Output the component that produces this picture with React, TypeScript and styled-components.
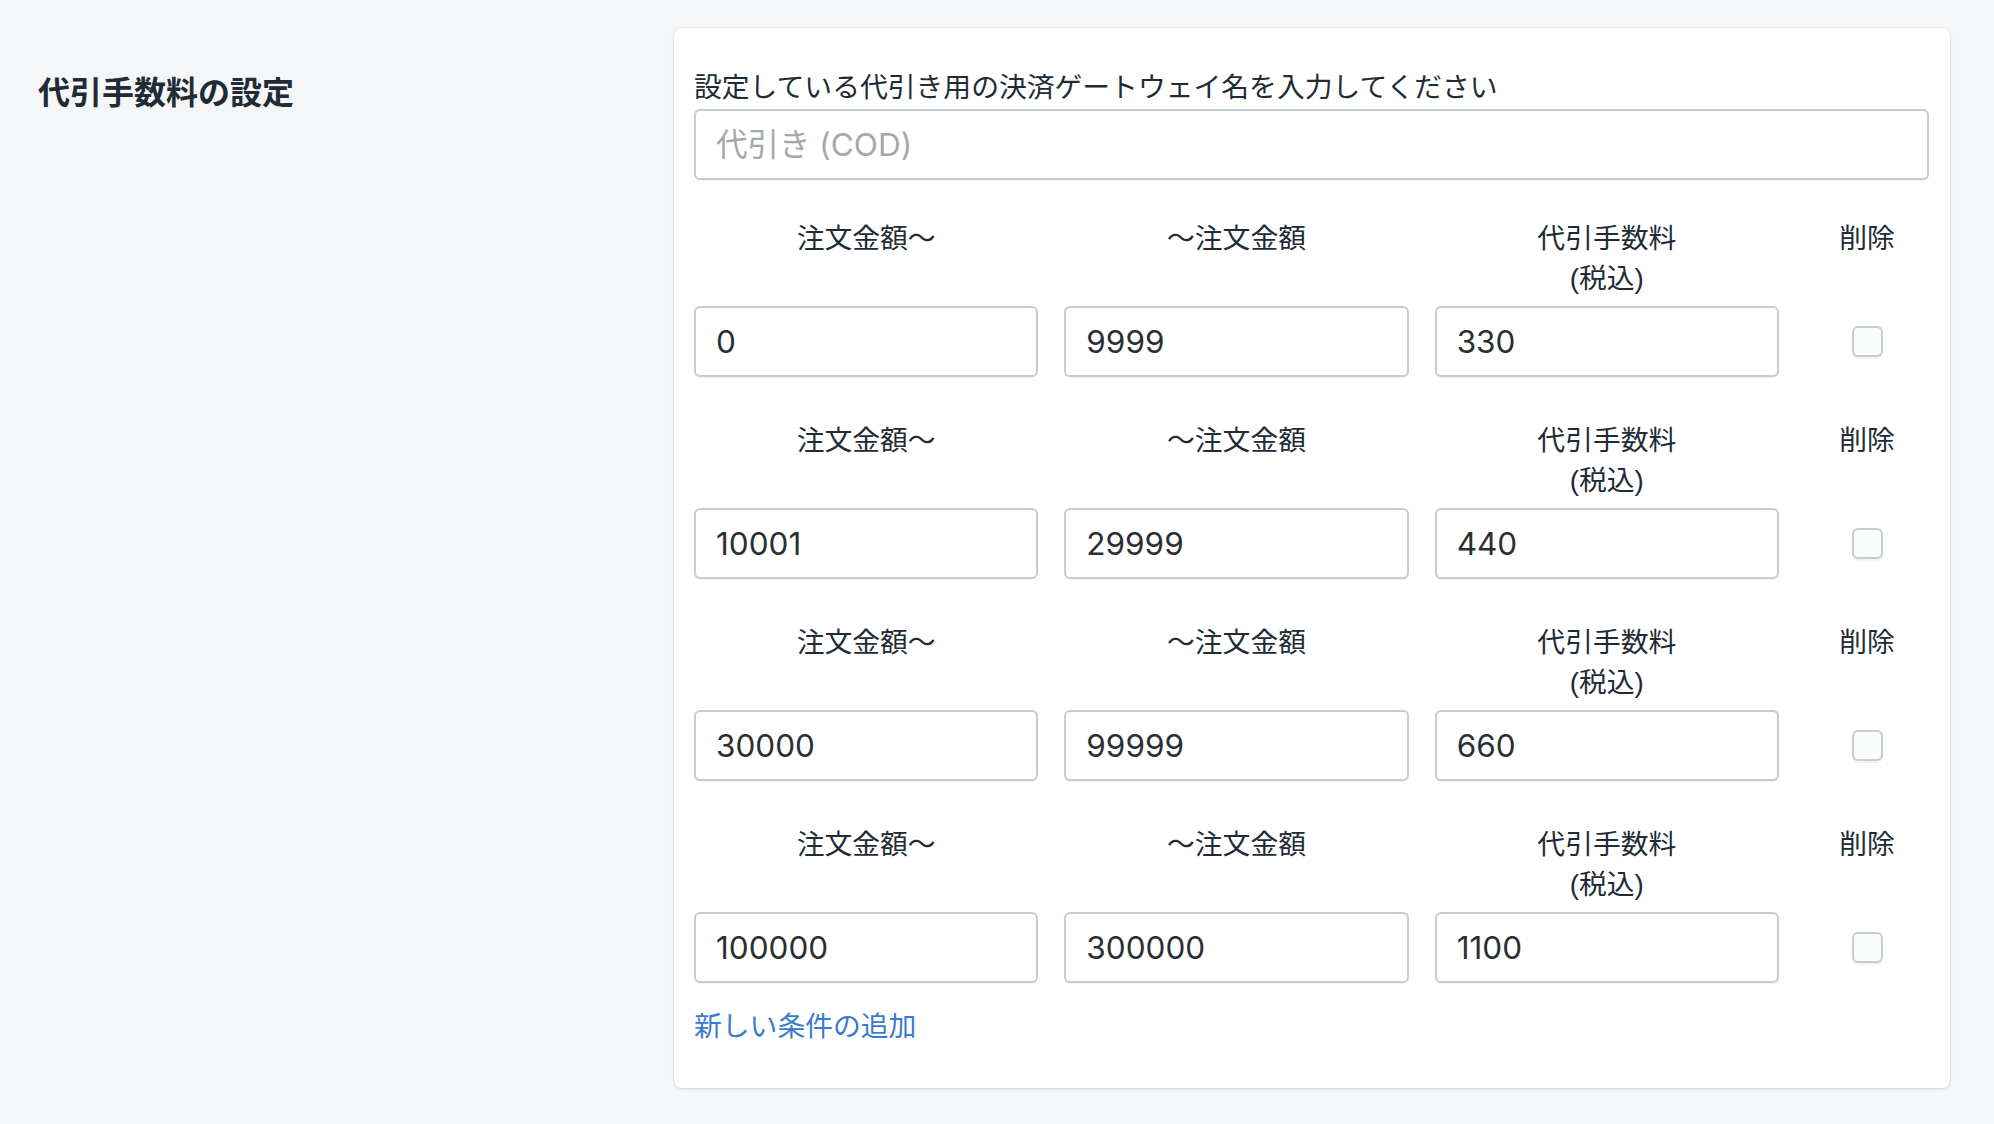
import React from "react";
import styled, { createGlobalStyle } from "styled-components";

const GlobalStyle = createGlobalStyle`
  html, body {
    margin: 0;
    padding: 0;
    background: #f4f6f8;
  }
  body {
    font-family: "Liberation Sans", "Noto Sans CJK JP", sans-serif;
    color: #212b36;
  }
  * { box-sizing: border-box; }
`;

const Page = styled.div`
  display: flex;
  align-items: flex-start;
  padding: 28px 44px 37px 38px;
  min-height: 1124px;
`;

const Aside = styled.div`
  width: 636px;
  flex: none;
`;

const Title = styled.h2`
  margin: 45px 0 0;
  font-family: "Liberation Sans", "Noto Sans CJK JP", sans-serif;
  font-size: 32px;
  line-height: 40px;
  font-weight: 700;
  color: #212b36;
`;

const Card = styled.section`
  flex: 1;
  background: #ffffff;
  border-radius: 8px;
  box-shadow: 0 0 0 1px rgba(63, 63, 68, 0.05), 0 1px 3px 0 rgba(63, 63, 68, 0.15);
  padding: 44px 21px 45px 20px;
`;

const FieldLabel = styled.label`
  display: block;
  font-size: 27.8px;
  line-height: 32px;
  color: #212b36;
  margin-bottom: 5px;
`;

const TextInput = styled.input`
  display: block;
  width: 100%;
  height: 71px;
  padding: 0 20px;
  font-family: Inter, "Noto Sans CJK JP", sans-serif;
  font-size: 31.5px;
  color: #2b2f33;
  background: #ffffff;
  border: 2px solid #c4cdd5;
  border-radius: 6px;
  box-shadow: 0 1px 0 0 rgba(22, 29, 37, 0.06);
  outline: none;

  &::placeholder {
    color: #a3a8ad;
  }
`;

const Rows = styled.div`
  display: flex;
  flex-direction: column;
  gap: 44px;
  margin-top: 39px;
`;

const Row = styled.div`
  display: grid;
  grid-template-columns: 1fr 1fr 1fr 124px;
  column-gap: 26px;
  row-gap: 7px;
  align-items: start;
`;

const Header = styled.div`
  font-size: 27.8px;
  line-height: 40px;
  text-align: center;
  color: #212b36;
  min-height: 80px;
`;

const CheckCell = styled.div`
  height: 71px;
  display: flex;
  align-items: center;
  justify-content: center;
`;

const Checkbox = styled.input.attrs({ type: "checkbox" })`
  appearance: none;
  -webkit-appearance: none;
  margin: 0;
  width: 31px;
  height: 31px;
  border: 2px solid #c4cdd5;
  border-radius: 6px;
  background: #fafbfb;
  box-shadow: 0 2px 0 0 rgba(22, 29, 37, 0.05);
`;

const AddLink = styled.a`
  display: inline-block;
  margin-top: 28px;
  font-size: 27.8px;
  line-height: 32px;
  color: #3a7bd0;
  text-decoration: none;
  cursor: pointer;
`;

type Rule = { from: string; to: string; fee: string };

const rules: Rule[] = [
  { from: "0", to: "9999", fee: "330" },
  { from: "10001", to: "29999", fee: "440" },
  { from: "30000", to: "99999", fee: "660" },
  { from: "100000", to: "300000", fee: "1100" },
];

export default function App() {
  return (
    <>
      <GlobalStyle />
      <Page>
        <Aside>
          <Title>代引手数料の設定</Title>
        </Aside>
        <Card>
          <FieldLabel htmlFor="gateway">
            設定している代引き用の決済ゲートウェイ名を入力してください
          </FieldLabel>
          <TextInput id="gateway" placeholder="代引き (COD)" />
          <Rows>
            {rules.map((r, i) => (
              <Row key={i}>
                <Header>注文金額〜</Header>
                <Header>〜注文金額</Header>
                <Header>
                  代引手数料
                  <br />
                  (税込)
                </Header>
                <Header>削除</Header>
                <TextInput defaultValue={r.from} />
                <TextInput defaultValue={r.to} />
                <TextInput defaultValue={r.fee} />
                <CheckCell>
                  <Checkbox />
                </CheckCell>
              </Row>
            ))}
          </Rows>
          <AddLink>新しい条件の追加</AddLink>
        </Card>
      </Page>
    </>
  );
}
